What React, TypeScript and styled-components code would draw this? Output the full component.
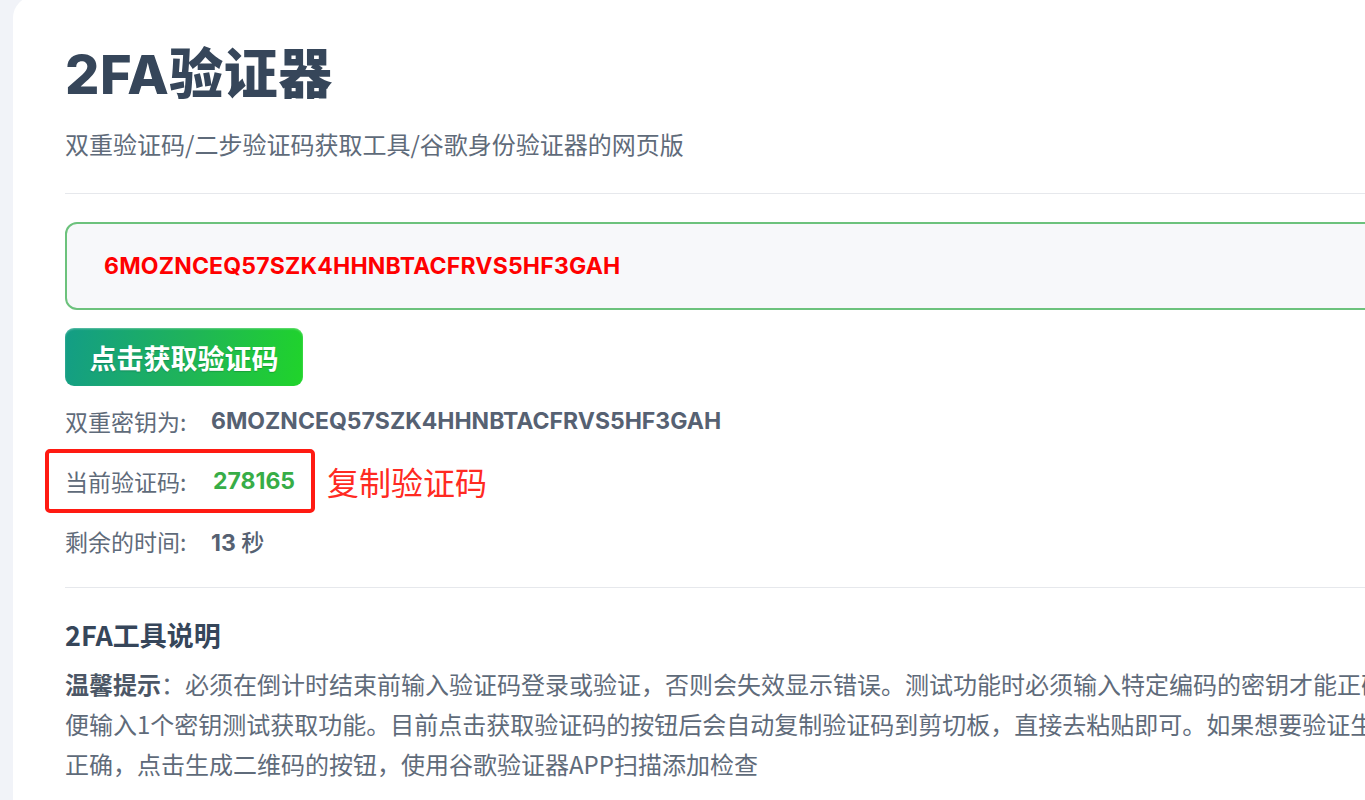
import React from 'react';
import styled, { createGlobalStyle } from 'styled-components';

const GlobalStyle = createGlobalStyle`
    html, body {
        margin:0;
        padding:0;
        background:#f1f3f8;
        overflow:hidden;
    }
    body {
        font-family:Inter, "Noto Sans CJK SC", sans-serif;
    }
`;

const Page = styled.div`
    padding-left:13px;
    height:800px;
    overflow:hidden;
`;

const Card = styled.div`
    width:1500px;
    min-height:820px;
    margin-top:-4px;
    background:#ffffff;
    border-top-left-radius:22px;
    padding:44px 0 0 52px;
    box-sizing:border-box;
`;

const Title = styled.h1`
    margin:0;
    font-size:54px;
    line-height:70px;
    font-weight:800;
    color:#36465a;
    letter-spacing:0.5px;
`;

const Subtitle = styled.p`
    margin:16px 0 0;
    font-size:24px;
    line-height:36px;
    color:#5f6b7a;
    font-family:"Noto Sans CJK SC", sans-serif;
`;

const Divider = styled.hr<{ $gap: number }>`
    border:0;
    border-top:1px solid #e6e8ec;
    margin:${p => p.$gap}px 0 0;
`;

const KeyBox = styled.div`
    margin-top:28px;
    height:88px;
    box-sizing:border-box;
    border:2px solid #6cc27c;
    border-radius:12px;
    background:#f7f8fa;
    display:flex;
    align-items:center;
    padding-left:37px;
    color:#ff0000;
    font-size:23px;
    font-weight:700;
    letter-spacing:0.2px;
`;

const FetchButton = styled.button`
    margin-top:18px;
    width:238px;
    height:58px;
    border:0;
    border-radius:9px;
    background:linear-gradient(100deg, #139d86 0%, #1fb35a 50%, #20d42a 100%);
    box-shadow:inset 0 1px 2px rgba(255,255,255,0.35);
    color:#ffffff;
    font-size:27px;
    font-weight:700;
    font-family:"Noto Sans CJK SC", sans-serif;
    text-shadow:0 1px 1px rgba(0,60,30,0.25);
    cursor:pointer;
`;

const InfoList = styled.div`
    margin-top:5px;
    display:flex;
    flex-direction:column;
`;

const InfoRow = styled.div`
    height:60px;
    display:flex;
    align-items:center;
    gap:12px;
`;

const HighlightBox = styled.div`
    margin-left:-20px;
    height:64px;
    box-sizing:border-box;
    border:4px solid #ff1a12;
    border-radius:5px;
    padding:0 16px 0 16px;
    display:flex;
    align-items:center;
    gap:14px;
`;

const Label = styled.span`
    font-size:23px;
    color:#5f6b7a;
    font-family:"Noto Sans CJK SC", sans-serif;
    min-width:134px;
`;

const Value = styled.span<{ $color?: string }>`
    font-size:23px;
    font-weight:700;
    color:${p => p.$color || '#566172'};
`;

const Unit = styled.span`
    font-family:"Noto Sans CJK SC", sans-serif;
    font-weight:500;
`;

const CopyHint = styled.span`
    font-size:32px;
    color:#ff2a22;
    font-family:"Noto Sans CJK SC", sans-serif;
`;

const SectionTitle = styled.h2`
    margin:28px 0 0;
    font-size:27px;
    line-height:38px;
    font-weight:700;
    color:#36465a;
    font-family:"Noto Sans CJK SC", sans-serif;
`;

const Paragraph = styled.p`
    margin:10px 0 0;
    font-size:24px;
    line-height:40px;
    color:#5f6b7a;
    white-space:nowrap;
    font-family:"Noto Sans CJK SC", sans-serif;

    b {
        color:#4c5766;
    }
`;

const SECRET = '6MOZNCEQ57SZK4HHNBTACFRVS5HF3GAH';

const App: React.FC = () => {
    return (
        <Page>
            <GlobalStyle />
            <Card>
                <Title>2FA验证器</Title>
                <Subtitle>双重验证码/二步验证码获取工具/谷歌身份验证器的网页版</Subtitle>
                <Divider $gap={31} />

                <KeyBox>{SECRET}</KeyBox>
                <FetchButton>点击获取验证码</FetchButton>

                <InfoList>
                    <InfoRow>
                        <Label>双重密钥为:</Label>
                        <Value>{SECRET}</Value>
                    </InfoRow>
                    <InfoRow>
                        <HighlightBox>
                            <Label>当前验证码:</Label>
                            <Value $color="#37ad47">278165</Value>
                        </HighlightBox>
                        <CopyHint>复制验证码</CopyHint>
                    </InfoRow>
                    <InfoRow>
                        <Label>剩余的时间:</Label>
                        <Value>13 <Unit>秒</Unit></Value>
                    </InfoRow>
                </InfoList>

                <Divider $gap={16} />

                <SectionTitle>2FA工具说明</SectionTitle>
                <Paragraph>
                    <b>温馨提示</b>：必须在倒计时结束前输入验证码登录或验证，否则会失效显示错误。测试功能时必须输入特定编码的密钥才能正确获取，可以随意方
                    <br />
                    便输入1个密钥测试获取功能。目前点击获取验证码的按钮后会自动复制验证码到剪切板，直接去粘贴即可。如果想要验证生成的验证码是否
                    <br />
                    正确，点击生成二维码的按钮，使用谷歌验证器APP扫描添加检查
                </Paragraph>
            </Card>
        </Page>
    );
};

export default App;
